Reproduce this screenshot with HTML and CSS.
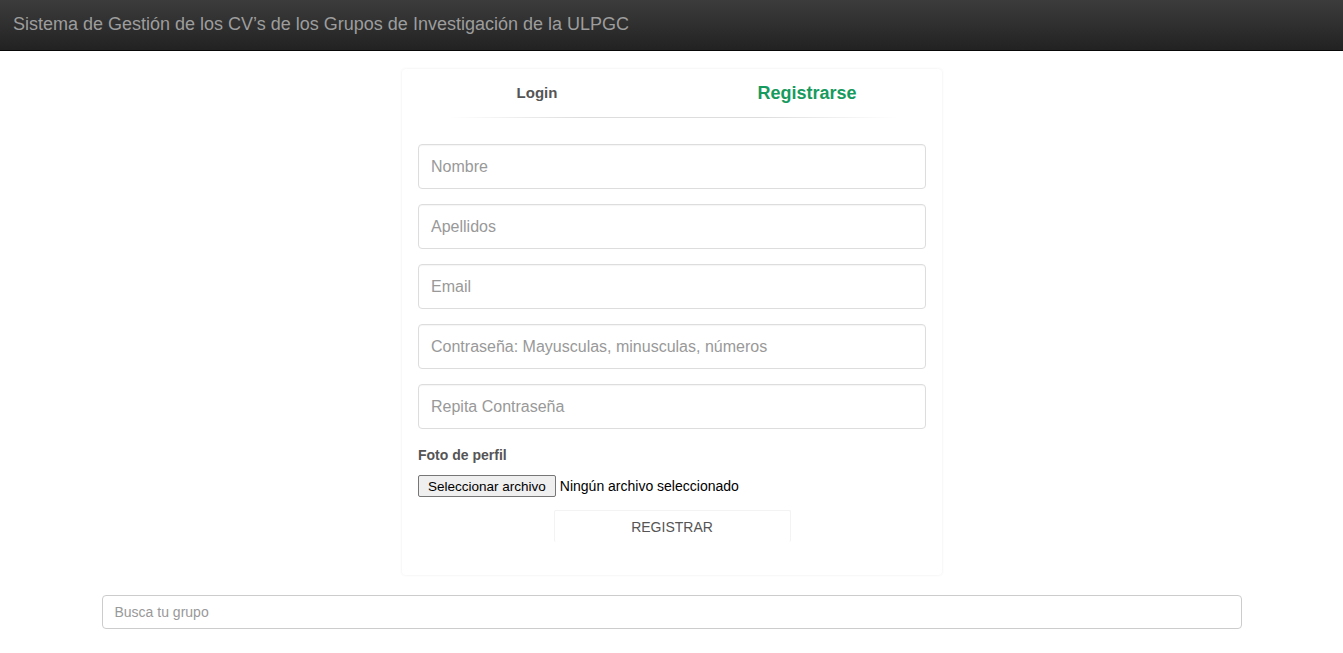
FILE: index.html
```html
<!DOCTYPE html>
<html lang="es">
<head>
<meta charset="utf-8">
<title>Registro</title>
<link rel="stylesheet" href="styles.css">
</head>
<body>
<header class="navbar">
  <span class="brand">Sistema de Gestión de los CV’s de los Grupos de Investigación de la ULPGC</span>
</header>
<main class="main">
  <section class="card">
    <nav class="tabs">
      <span class="tab">Login</span>
      <span class="tab active">Registrarse</span>
    </nav>
    <div class="tab-line"></div>
    <form class="form">
      <input class="field" type="text" placeholder="Nombre">
      <input class="field" type="text" placeholder="Apellidos">
      <input class="field" type="text" placeholder="Email">
      <input class="field" type="password" placeholder="Contraseña: Mayusculas, minusculas, números">
      <input class="field" type="password" placeholder="Repita Contraseña">
      <label class="label">Foto de perfil</label>
      <div class="file-row">
        <span class="file-btn">Seleccionar archivo</span>
        <span class="file-text">Ningún archivo seleccionado</span>
      </div>
      <div class="submit-row">
        <span class="submit">REGISTRAR</span>
      </div>
    </form>
  </section>
  <div class="search-wrap">
    <input class="search" type="text" placeholder="Busca tu grupo">
  </div>
</main>
</body>
</html>
```

FILE: styles.css
```css
* { box-sizing: border-box; }
html, body { margin: 0; padding: 0; background: #fff; }
body { font-family: "Liberation Sans", Arial, sans-serif; font-size: 14px; color: #333; }

.navbar {
  height: 51px;
  background: linear-gradient(to bottom, #3c3c3c 0%, #222 100%);
  border-bottom: 1px solid #080808;
  display: flex;
  align-items: center;
  padding-left: 13px;
  padding-bottom: 2px;
}
.brand { color: #9d9d9d; font-size: 18px; }

.main { display: flex; flex-direction: column; align-items: center; padding-top: 18px; }

.card {
  width: 540px;
  margin-left: 1px;
  background: #fff;
  border-radius: 4px;
  box-shadow: 0 0 3px rgba(0,0,0,0.08);
  padding: 0 0 33px;
}
.tabs { display: flex; height: 48px; }
.tab {
  flex: 1;
  display: flex;
  justify-content: center;
  align-items: center;
  font-weight: bold;
  font-size: 15px;
  color: #555;
  padding-bottom: 1px;
}
.tab.active { color: #179a5e; font-size: 18px; padding-top: 2px; }
.tab-line {
  height: 1px;
  margin: 0 44px 0 46px;
  background: linear-gradient(to right, rgba(221,221,221,0), #ddd 30%, #ddd 70%, rgba(221,221,221,0));
}

.form { display: flex; flex-direction: column; padding: 26px 16px 0; }
.field {
  height: 45px;
  border: 1px solid #ddd;
  border-radius: 4px;
  padding: 0 12px;
  font-family: "Liberation Sans", Arial, sans-serif;
  font-size: 16px;
  color: #555;
  margin-bottom: 15px;
  box-shadow: inset 0 1px 1px rgba(0,0,0,0.04);
  outline: none;
}
.field::placeholder { color: #999; }

.label { font-weight: bold; font-size: 14px; color: #555; margin-top: 3px; margin-bottom: 12px; }
.file-row { display: flex; align-items: center; height: 22px; }
.file-btn {
  font-family: "Liberation Sans", Arial, sans-serif;
  font-size: 13.5px;
  color: #000;
  background: #efefef;
  border: 1px solid #767676;
  border-radius: 2px;
  padding: 2px 9px;
  height: 22px;
  display: flex;
  align-items: center;
}
.file-text { font-size: 14px; color: #000; margin-left: 4px; }

.submit-row { display: flex; justify-content: center; margin-top: 13px; }
.submit {
  width: 237px;
  height: 32px;
  display: flex;
  justify-content: center;
  align-items: center;
  font-size: 14px;
  color: #555;
  border: 1px solid #f3f3f3;
  border-bottom: none;
  border-radius: 2px;
}

.search-wrap { width: 1140px; margin-top: 20px; }
.search {
  width: 100%;
  height: 34px;
  border: 1px solid #ccc;
  border-radius: 4px;
  padding: 0 12px;
  font-family: "Liberation Sans", Arial, sans-serif;
  font-size: 14px;
  outline: none;
}
.search::placeholder { color: #999; }
```
